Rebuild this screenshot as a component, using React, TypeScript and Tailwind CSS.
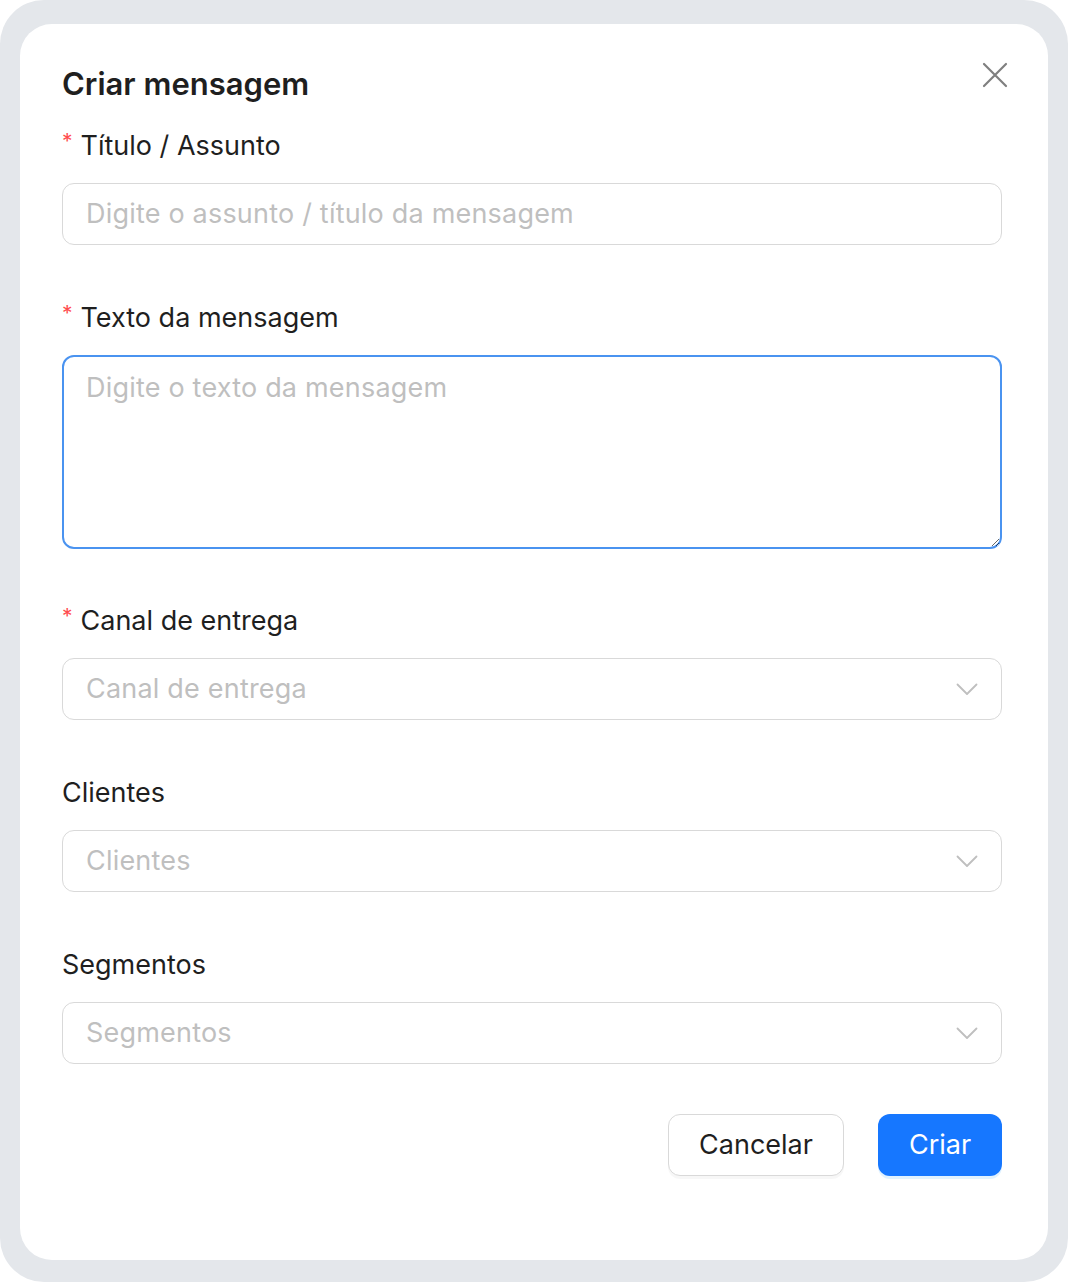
import React from "react";

const font = { fontFamily: "Inter, 'Noto Sans', 'Liberation Sans', sans-serif" };

function Label({ text, required }: { text: string; required?: boolean }) {
  return (
    <div className="flex h-[44px] items-center mb-[16px] text-[27px] text-[#1f1f1f] leading-none">
      {required && <span className="text-[#ff4d4f] text-[21px] mr-[8px] -mt-[8px]">*</span>}
      <span>{text}</span>
    </div>
  );
}

function Chevron() {
  return (
    <svg width="22" height="13" viewBox="0 0 22 13" fill="none">
      <path d="M1.5 1.5 L11 11 L20.5 1.5" stroke="#bfbfbf" strokeWidth="1.8" strokeLinecap="round" strokeLinejoin="round" />
    </svg>
  );
}

function SelectBox({ placeholder }: { placeholder: string }) {
  return (
    <div className="flex h-[62px] items-center justify-between rounded-[12px] border-[1.5px] border-[#d9d9d9] bg-white pl-[23px] pr-[23px]">
      <span className="text-[27px] text-[#bfbfbf] tracking-[0.2px]">{placeholder}</span>
      <Chevron />
    </div>
  );
}

export default function App() {
  return (
    <div className="bg-white w-[1068px] h-[1282px]" style={font}>
      <div className="w-[1068px] h-[1282px] rounded-[44px] bg-[#e4e7eb] pt-[24px] pl-[20px] pr-[20px]">
        <div className="relative h-[1236px] rounded-[32px] bg-white pl-[42px] pr-[46px] pt-[38px]">
          <button className="absolute right-[40px] top-[38px] w-[26px] h-[26px] flex items-center justify-center">
            <svg width="26" height="26" viewBox="0 0 26 26" fill="none">
              <path d="M2 2 L24 24 M24 2 L2 24" stroke="#7f7f7f" strokeWidth="2.2" strokeLinecap="round" />
            </svg>
          </button>
          <div className="h-[44px] flex items-center text-[31px] font-semibold text-[#1f1f1f]">Criar mensagem</div>
          <div className="mt-[17px]">
            <Label text="Título / Assunto" required />
            <div className="flex h-[62px] items-center rounded-[12px] border-[1.5px] border-[#d9d9d9] pl-[23px]">
              <span className="text-[27px] text-[#bfbfbf] tracking-[0.2px]">Digite o assunto / título da mensagem</span>
            </div>
          </div>
          <div className="mt-[50px]">
            <Label text="Texto da mensagem" required />
            <textarea
              placeholder="Digite o texto da mensagem"
              className="block w-full h-[194px] rounded-[12px] border-2 border-[#4a93f0] px-[22px] py-[11px] text-[27px] tracking-[0.2px] text-[#1f1f1f] placeholder:text-[#bfbfbf] outline-none resize-y"
              style={font}
            />
          </div>
          <div className="mt-[49px]">
            <Label text="Canal de entrega" required />
            <SelectBox placeholder="Canal de entrega" />
          </div>
          <div className="mt-[50px]">
            <Label text="Clientes" />
            <SelectBox placeholder="Clientes" />
          </div>
          <div className="mt-[50px]">
            <Label text="Segmentos" />
            <SelectBox placeholder="Segmentos" />
          </div>
          <div className="mt-[50px] flex justify-end gap-[34px]">
            <button className="h-[62px] w-[176px] rounded-[12px] border-[1.5px] border-[#d9d9d9] bg-white text-[27px] text-[#1f1f1f] shadow-[0_3px_0_rgba(0,0,0,0.03)]">
              Cancelar
            </button>
            <button className="h-[62px] w-[124px] rounded-[12px] bg-[#1677ff] text-[27px] text-white shadow-[0_3px_0_rgba(5,145,255,0.12)]">
              Criar
            </button>
          </div>
        </div>
      </div>
    </div>
  );
}
